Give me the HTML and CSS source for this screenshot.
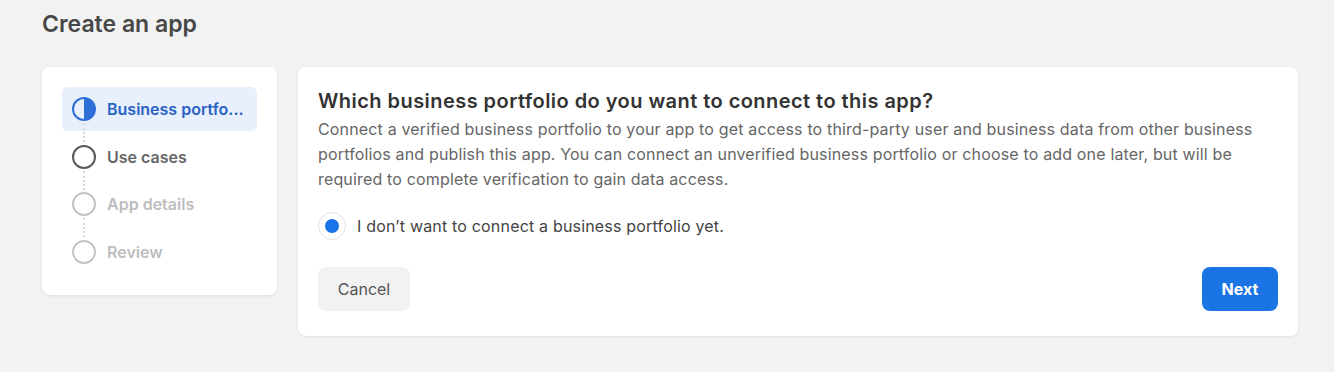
FILE: index.html
```html
<!DOCTYPE html>
<html>
<head>
<meta charset="utf-8">
<link rel="stylesheet" href="styles.css">
</head>
<body>
<div class="page">
  <h1 class="page-title">Create an app</h1>
  <div class="layout">
    <nav class="steps">
      <div class="step active">
        <svg class="step-icon" viewBox="0 0 24 24" width="24" height="24">
          <circle cx="12" cy="12" r="11" fill="none" stroke="#2d6fd6" stroke-width="2"/>
          <path d="M12 1 A11 11 0 0 1 12 23 Z" fill="#2d6fd6"/>
        </svg>
        <span class="step-label">Business portfo...</span>
      </div>
      <div class="step current">
        <svg class="step-icon" viewBox="0 0 24 24" width="24" height="24">
          <circle cx="12" cy="12" r="11" fill="none" stroke="#5a5a5a" stroke-width="2"/>
        </svg>
        <span class="step-label">Use cases</span>
      </div>
      <div class="step pending">
        <svg class="step-icon" viewBox="0 0 24 24" width="24" height="24">
          <circle cx="12" cy="12" r="11" fill="none" stroke="#c4c4c4" stroke-width="2"/>
        </svg>
        <span class="step-label">App details</span>
      </div>
      <div class="step pending last">
        <svg class="step-icon" viewBox="0 0 24 24" width="24" height="24">
          <circle cx="12" cy="12" r="11" fill="none" stroke="#c4c4c4" stroke-width="2"/>
        </svg>
        <span class="step-label">Review</span>
      </div>
    </nav>
    <main class="card">
      <h2 class="card-title">Which business portfolio do you want to connect to this app?</h2>
      <p class="card-text">Connect a verified business portfolio to your app to get access to third-party user and business data from other business portfolios and publish this app. You can connect an unverified business portfolio or choose to add one later, but will be required to complete verification to gain data access.</p>
      <label class="option">
        <span class="radio"><span class="radio-dot"></span></span>
        <span class="option-text">I don’t want to connect a business portfolio yet.</span>
      </label>
      <div class="actions">
        <button class="btn btn-secondary">Cancel</button>
        <button class="btn btn-primary">Next</button>
      </div>
    </main>
  </div>
</div>
</body>
</html>
```

FILE: styles.css
```css
* { box-sizing: border-box; }
html, body { margin: 0; padding: 0; }
body {
  background: #f2f2f2;
  font-family: Inter, Roboto, "Liberation Sans", Arial, sans-serif;
  width: 1334px;
  height: 372px;
  overflow: hidden;
}
.page {
  padding: 9px 0 0 42px;
}
.page-title {
  margin: 0;
  font-size: 23px;
  line-height: 30px;
  font-weight: 600;
  color: #474747;
}
.layout {
  display: flex;
  align-items: flex-start;
  gap: 21px;
  margin-top: 28px;
}
.steps {
  width: 235px;
  background: #fff;
  border-radius: 8px;
  box-shadow: 0 1px 3px rgba(0,0,0,0.08);
  padding: 20px 20px 21px;
  display: flex;
  flex-direction: column;
  gap: 3.5px;
}
.step {
  position: relative;
  display: flex;
  align-items: center;
  gap: 11px;
  height: 44px;
  padding-left: 10px;
  border-radius: 6px;
  font-size: 16px;
  font-weight: 600;
  white-space: nowrap;
}
.step::after {
  content: "";
  position: absolute;
  left: 21px;
  top: 36px;
  height: 19px;
  border-left: 2px dotted #d8d8d8;
}
.step.last::after { display: none; }
.step-icon { flex: none; }
.step.active {
  background: #e7f0fc;
  color: #2a62c4;
}
.step.current { color: #666; }
.step.pending { color: #bdbdbd; }
.card {
  width: 1000px;
  background: #fff;
  border-radius: 8px;
  box-shadow: 0 1px 3px rgba(0,0,0,0.08);
  padding: 20px 20px 25px;
}
.card-title {
  margin: 0;
  font-size: 20px;
  line-height: 28px;
  font-weight: 600;
  letter-spacing: 0.45px;
  color: #333;
}
.card-text {
  margin: 2px 0 0;
  font-size: 16px;
  line-height: 25px;
  letter-spacing: 0.16px;
  color: #666;
}
.option {
  display: flex;
  align-items: center;
  gap: 11px;
  margin-top: 20px;
}
.radio {
  width: 28px;
  height: 28px;
  border-radius: 50%;
  border: 1px solid #e2e2e2;
  display: flex;
  align-items: center;
  justify-content: center;
}
.radio-dot {
  width: 14px;
  height: 14px;
  border-radius: 50%;
  background: #1a73e8;
}
.option-text {
  font-size: 16px;
  letter-spacing: 0.18px;
  color: #444;
}
.actions {
  display: flex;
  justify-content: space-between;
  margin-top: 27px;
}
.btn {
  height: 44px;
  border: none;
  border-radius: 8px;
  font-family: inherit;
  font-size: 16px;
  padding: 0;
}
.btn-secondary {
  width: 92px;
  background: #f2f2f2;
  color: #555;
}
.btn-primary {
  width: 76px;
  background: #1b74e4;
  color: #fff;
  font-weight: 700;
}
```
